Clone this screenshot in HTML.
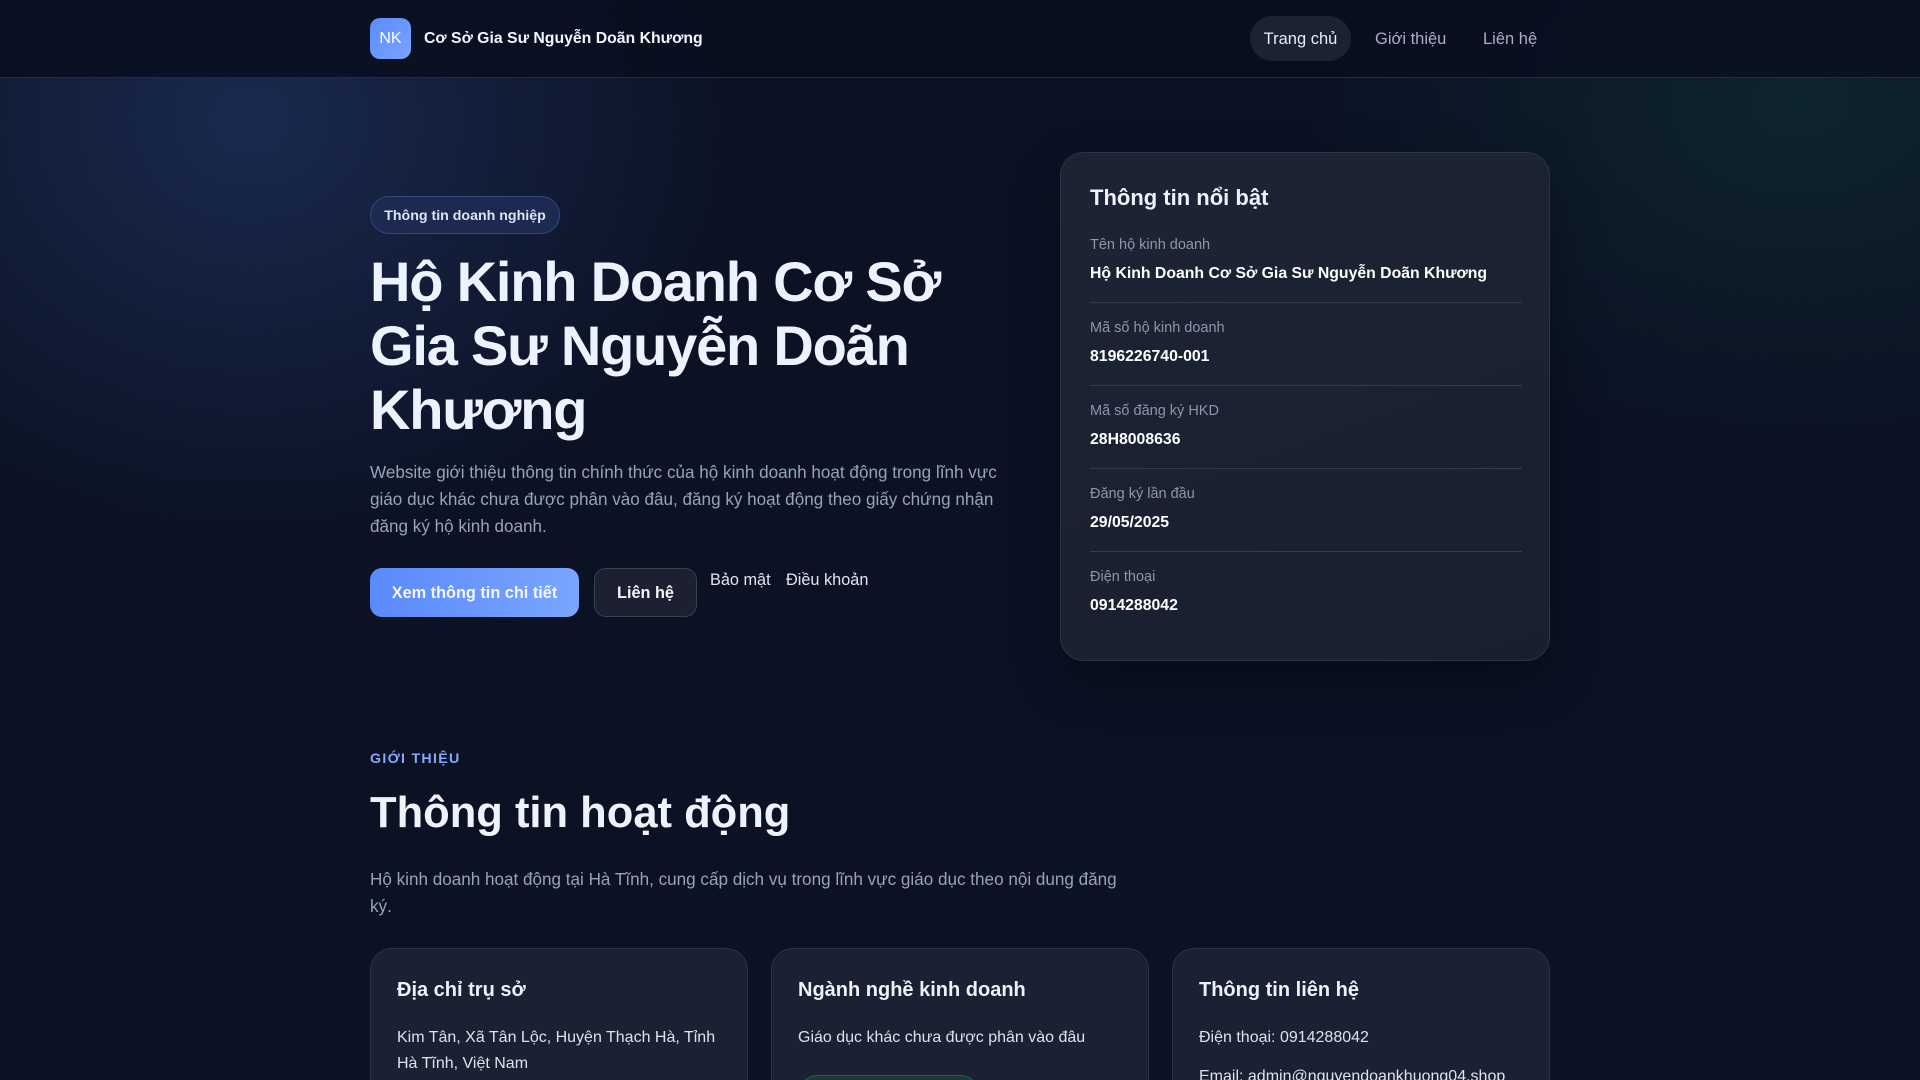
<!DOCTYPE html>
<html><head><meta charset="utf-8"><style>
*{box-sizing:border-box;margin:0;padding:0}
html,body{width:1920px;height:1080px;overflow:hidden}
body{font-family:"Liberation Sans","DejaVu Sans",sans-serif;color:#eef2fb;
background:
radial-gradient(ellipse 700px 600px at 250px 120px,rgba(40,64,120,.5),transparent 70%),
radial-gradient(ellipse 700px 500px at 1800px 100px,rgba(20,70,60,.35),transparent 70%),
#0b1224;position:relative}
.nav{position:absolute;left:0;top:0;width:1920px;height:78px;background:rgba(9,14,30,.85);border-bottom:1px solid #252c3c}
.logo{position:absolute;left:370px;top:18px;width:41px;height:41px;border-radius:10px;background:linear-gradient(135deg,#5b8cff,#79a4ff);color:#fff;font-size:16px;display:flex;align-items:center;justify-content:center}
.brand{position:absolute;left:424px;top:30px;font-size:15.8px;font-weight:bold;color:#f2f5fb}
.nl{position:absolute;top:16px;height:45px;line-height:47px;font-size:16.5px;color:#a7b1c6}
.pill{left:1250px;width:101px;border-radius:23px;background:#1d2232;color:#e8ecf5;text-align:center}
.badge{position:absolute;left:370px;top:196px;width:190px;height:38px;border-radius:19px;background:#1c2a52;border:1px solid #34487e;font-size:14.2px;font-weight:bold;color:#dce4f7;line-height:38px;text-align:center}
h1{position:absolute;left:370px;top:250px;width:640px;font-size:56px;line-height:64px;font-weight:bold;letter-spacing:-1.2px;color:#edf2ff}
.lead{position:absolute;left:370px;top:459px;width:640px;font-size:17.1px;line-height:27px;color:#98a3b8}
.btn{position:absolute;top:568px;height:49px;border-radius:12px;font-size:16.3px;font-weight:bold;line-height:50px;text-align:center}
.b1{left:370px;width:209px;background:linear-gradient(90deg,#5a8afc,#7aa5ff);color:#f4f7ff}
.b2{left:594px;width:103px;background:#1c2030;border:1px solid #3a4050;line-height:48px;color:#f4f6fb}
.tl{position:absolute;top:571px;font-size:16.3px;color:#dfe4ef}
.card{position:absolute;left:1060px;top:152px;width:490px;height:509px;border-radius:24px;background:linear-gradient(160deg,#1c2434,#1a1f2e);border:1px solid #2d3445;box-shadow:0 20px 50px rgba(0,0,0,.35)}
.card h3{position:absolute;left:29px;top:32px;font-size:22px;color:#eef2fa}
.it{position:absolute;left:29px;width:432px;height:66px}
.it .l{position:absolute;top:0;font-size:14.5px;color:#8d96aa}
.it .v{position:absolute;top:28px;font-size:15.8px;font-weight:bold;color:#fff}
.it.d{border-bottom:1px solid #343b4c}
.kick{position:absolute;left:370px;top:751px;font-size:14.2px;font-weight:bold;letter-spacing:1.3px;color:#86a8ff}
h2{position:absolute;left:370px;top:789px;font-size:43.5px;color:#eef2fb}
.p2{position:absolute;left:370px;top:866px;width:760px;font-size:17.1px;line-height:27px;color:#98a3b8}
.c{position:absolute;top:948px;width:378px;height:160px;border-radius:22px;background:#1b2032;border:1px solid #2c3345}
.c h4{position:absolute;left:26px;top:30px;font-size:20px;color:#edf1fa}
.c p{position:absolute;left:26px;top:76px;width:330px;font-size:16px;line-height:26px;color:#dde2ec}
.tag{position:absolute;left:26px;top:126px;width:182px;height:40px;border-radius:20px;background:#173a35;border:1px solid #24614f}
</style></head><body>
<div class="nav">
<div class="logo">NK</div>
<div class="brand">Cơ Sở Gia Sư Nguyễn Doãn Khương</div>
<div class="nl pill">Trang chủ</div>
<div class="nl" style="left:1375px">Giới thiệu</div>
<div class="nl" style="left:1483px">Liên hệ</div>
</div>
<div class="badge">Thông tin doanh nghiệp</div>
<h1>Hộ Kinh Doanh Cơ Sở Gia Sư Nguyễn Doãn Khương</h1>
<div class="lead">Website giới thiệu thông tin chính thức của hộ kinh doanh hoạt động trong lĩnh vực giáo dục khác chưa được phân vào đâu, đăng ký hoạt động theo giấy chứng nhận đăng ký hộ kinh doanh.</div>
<div class="btn b1">Xem thông tin chi tiết</div>
<div class="btn b2">Liên hệ</div>
<div class="tl" style="left:710px">Bảo mật</div>
<div class="tl" style="left:786px">Điều khoản</div>
<div class="card">
<h3>Thông tin nổi bật</h3>
<div class="it d" style="top:84px"><div class="l">Tên hộ kinh doanh</div><div class="v">Hộ Kinh Doanh Cơ Sở Gia Sư Nguyễn Doãn Khương</div></div>
<div class="it d" style="top:167px"><div class="l">Mã số hộ kinh doanh</div><div class="v">8196226740-001</div></div>
<div class="it d" style="top:250px"><div class="l">Mã số đăng ký HKD</div><div class="v">28H8008636</div></div>
<div class="it d" style="top:333px"><div class="l">Đăng ký lần đầu</div><div class="v">29/05/2025</div></div>
<div class="it" style="top:416px"><div class="l">Điện thoại</div><div class="v">0914288042</div></div>
</div>
<div class="kick">GIỚI THIỆU</div>
<h2>Thông tin hoạt động</h2>
<div class="p2">Hộ kinh doanh hoạt động tại Hà Tĩnh, cung cấp dịch vụ trong lĩnh vực giáo dục theo nội dung đăng ký.</div>
<div class="c" style="left:370px"><h4>Địa chỉ trụ sở</h4><p>Kim Tân, Xã Tân Lộc, Huyện Thạch Hà, Tỉnh Hà Tĩnh, Việt Nam</p></div>
<div class="c" style="left:771px"><h4>Ngành nghề kinh doanh</h4><p>Giáo dục khác chưa được phân vào đâu</p><div class="tag"></div></div>
<div class="c" style="left:1172px"><h4>Thông tin liên hệ</h4><p>Điện thoại: 0914288042<br><span style="display:block;margin-top:13px">Email: admin@nguyendoankhuong04.shop</span></p></div>
</body></html>
